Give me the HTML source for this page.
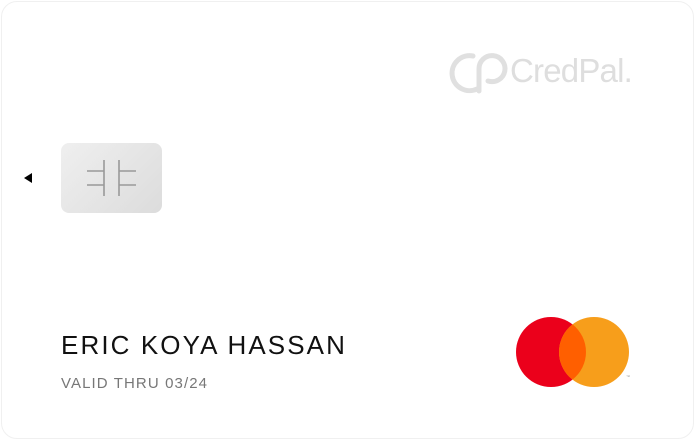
<!DOCTYPE html>
<html><head><meta charset="utf-8"><style>
html,body{margin:0;padding:0;background:#fff;}
body{width:695px;height:440px;position:relative;overflow:hidden;font-family:"Liberation Sans",sans-serif;}
.card{position:absolute;left:1px;top:1px;width:691px;height:436px;border:1px solid #f0f0f0;border-radius:16px;background:#fff;}
.chip{position:absolute;left:61px;top:143px;width:101px;height:70px;border-radius:8px;background:linear-gradient(135deg,#efefef,#dcdcdc);}
.arrow{position:absolute;left:24px;top:173px;width:0;height:0;border-top:5px solid transparent;border-bottom:5px solid transparent;border-right:8px solid #000;}
.name{position:absolute;left:61px;top:330px;font-size:26px;letter-spacing:2.1px;color:#111;white-space:nowrap;}
.valid{position:absolute;left:61px;top:375px;font-size:15px;letter-spacing:1.1px;color:#777;white-space:nowrap;}
.logo{position:absolute;left:510px;top:52px;font-size:33px;color:#dedede;letter-spacing:-0.8px;white-space:nowrap;}
</style></head><body>
<div class="card"></div>
<svg style="position:absolute;left:440px;top:45px" width="70" height="55" viewBox="0 0 70 55">
<path d="M33 11 A17.5 17.5 0 1 0 37 44" fill="none" stroke="#e0e0e0" stroke-width="5" stroke-linecap="round"/>
<path d="M39 46 V24 A13 13 0 1 1 48 36" fill="none" stroke="#e0e0e0" stroke-width="5" stroke-linecap="round"/>
</svg>
<div class="logo">CredPal.</div>
<div class="arrow"></div>
<div class="chip">
<svg width="101" height="70" viewBox="0 0 101 70">
<g stroke="#999" stroke-width="1.6" fill="none">
<line x1="43" y1="17" x2="43" y2="53"/><line x1="26" y1="28" x2="43" y2="28"/><line x1="26" y1="42" x2="43" y2="42"/>
<line x1="58" y1="17" x2="58" y2="53"/><line x1="58" y1="28" x2="75" y2="28"/><line x1="58" y1="42" x2="75" y2="42"/>
</g></svg>
</div>
<div class="name">ERIC KOYA HASSAN</div>
<div class="valid">VALID THRU 03/24</div>
<svg style="position:absolute;left:510px;top:312px" width="125" height="80" viewBox="0 0 125 80">
<circle cx="41" cy="40" r="35" fill="#eb001b"/>
<circle cx="84" cy="40" r="35" fill="#f79e1b"/>
<path d="M62.5 12.4 A35 35 0 0 1 62.5 67.6 A35 35 0 0 1 62.5 12.4Z" fill="#ff5f00"/>
<text x="116" y="66" font-size="4" fill="#999" font-family="Liberation Sans">™</text>
</svg>
</body></html>
